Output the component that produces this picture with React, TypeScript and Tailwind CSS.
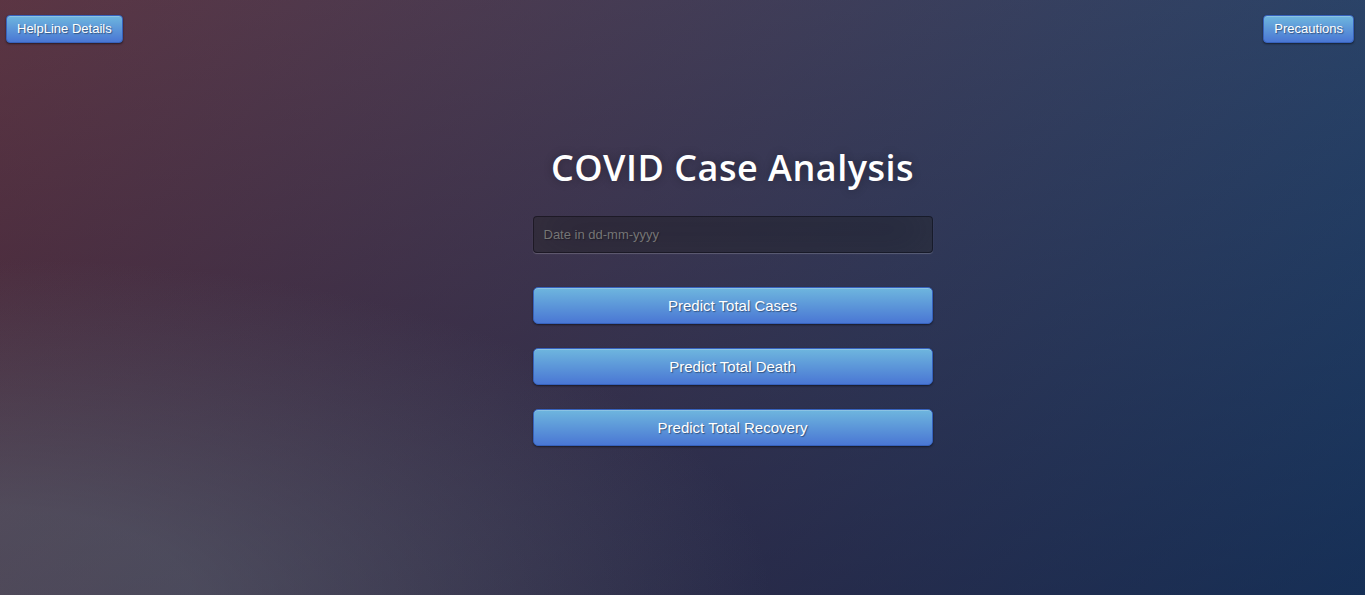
import React from "react";

const bigBtn =
  "w-full block rounded-[5px] border border-[#3762bc] bg-[#4a77d4] bg-[linear-gradient(to_bottom,#6eb6de,#4a77d4)] px-[14px] py-[9px] text-[15px] leading-[17px] text-white [text-shadow:1px_1px_1px_rgba(0,0,0,0.4)] shadow-[inset_0_1px_0_rgba(255,255,255,0.2),0_1px_2px_rgba(0,0,0,0.5)] text-center";

const smallBtn =
  "rounded-[4px] border border-[#3762bc] bg-[#4a77d4] bg-[linear-gradient(to_bottom,#6eb6de,#4a77d4)] px-[10px] py-[4px] text-[13px] leading-[18px] text-white [text-shadow:1px_1px_1px_rgba(0,0,0,0.4)] shadow-[inset_0_1px_0_rgba(255,255,255,0.2),0_1px_2px_rgba(0,0,0,0.5)]";

export default function App() {
  return (
    <div
      className="h-[595px] w-full overflow-hidden bg-[#092756] bg-[image:radial-gradient(ellipse_farthest-corner_at_0%_100%,rgba(104,128,138,0.4)_10%,rgba(138,114,76,0)_40%),linear-gradient(to_bottom,rgba(57,173,219,0.25)_0%,rgba(42,60,87,0.4)_100%),linear-gradient(135deg,#670d10_0%,#092756_100%)] font-['Liberation_Sans',Arial,sans-serif]"
    >
      <div className="flex justify-between pl-[6px] pr-[11px] pt-[15px]">
        <button className={smallBtn}>HelpLine Details</button>
        <button className={smallBtn}>Precautions</button>
      </div>
      <div className="flex justify-center pl-[100px] pt-[100px]">
        <div className="w-[400px] flex flex-col">
          <h1 className="text-center text-[36px] leading-[49px] font-semibold text-white tracking-[0.5px] font-['Open_Sans',sans-serif] [text-shadow:0_0_10px_rgba(0,0,0,0.3)]">
            COVID Case Analysis
          </h1>
          <input
            placeholder="Date in dd-mm-yyyy"
            className="mt-[24px] w-full rounded-[4px] border border-[rgba(0,0,0,0.3)] bg-[rgba(0,0,0,0.3)] p-[10px] text-[13px] leading-[15px] text-white outline-none placeholder:text-[#757575] [text-shadow:1px_1px_1px_rgba(0,0,0,0.3)] shadow-[inset_0_-5px_45px_rgba(100,100,100,0.2),0_1px_1px_rgba(255,255,255,0.2)]"
          />
          <div className="mt-[34px] flex flex-col gap-[24px]">
            <button className={bigBtn}>Predict Total Cases</button>
            <button className={bigBtn}>Predict Total Death</button>
            <button className={bigBtn}>Predict Total Recovery</button>
          </div>
        </div>
      </div>
    </div>
  );
}
